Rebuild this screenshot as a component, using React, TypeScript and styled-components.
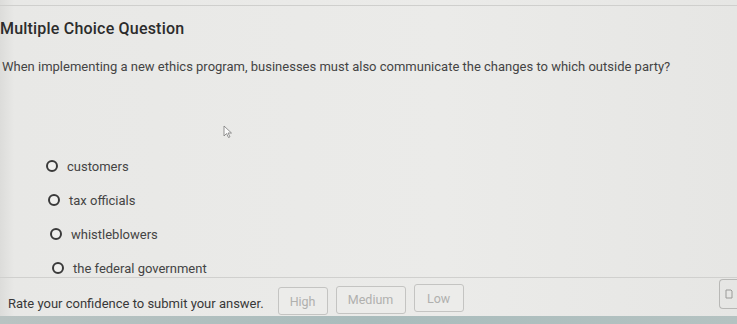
import React from "react";
import styled, { createGlobalStyle } from "styled-components";

const options = ["customers", "tax officials", "whistleblowers", "the federal government"];
const ratings = [
  { label: "High", width: 50 },
  { label: "Medium", width: 70 },
  { label: "Low", width: 50 },
];

const GlobalStyle = createGlobalStyle`
  html, body {
    margin: 0;
    padding: 0;
    background: #e7e7e5;
    font-family: Roboto, Lato, "Liberation Sans", sans-serif;
  }
`;

const Page = styled.div`
  width: 737px;
  height: 324px;
  overflow: hidden;
  display: flex;
  flex-direction: column;
  background: linear-gradient(90deg, #dcdcda 0px, #e8e8e6 14px, #ebebe9 60%, #e6e6e4 100%);
  color: #3a3a3a;
`;

const Main = styled.div`
  flex: 1;
  border-top: 1px solid #cfcfcd;
  margin-top: 5px;
  position: relative;
`;

const Title = styled.h1`
  margin: 13px 0 0 0;
  font-size: 16px;
  font-weight: 500;
  color: #2c2c2c;
  letter-spacing: 0.2px;
`;

const Question = styled.p`
  margin: 21px 0 0 2px;
  font-size: 13px;
  color: #444;
`;

const Cursor = styled.svg`
  position: absolute;
  left: 223px;
  top: 119px;
`;

const OptionList = styled.div`
  display: flex;
  flex-direction: column;
  gap: 16px;
  margin: 83px 0 0 46px;
`;

const Option = styled.label<{ $shift: number }>`
  display: flex;
  align-items: center;
  gap: 9px;
  margin-left: ${(p) => p.$shift}px;
  font-size: 13px;
  color: #444;
  height: 18px;
`;

const Radio = styled.span`
  width: 8px;
  height: 8px;
  border-radius: 50%;
  border: 2px solid #3a3a3a;
  background: #f0f0ee;
`;

const Footer = styled.div`
  height: 38px;
  border-top: 1px solid #d0d0ce;
  display: flex;
  align-items: flex-start;
  padding: 0 0 0 8px;
`;

const Prompt = styled.span`
  font-size: 13px;
  color: #383838;
  margin: 18px 14px 0 0;
`;

const RateButton = styled.button<{ $w: number; $top: number }>`
  width: ${(p) => p.$w}px;
  height: 28px;
  margin: ${(p) => p.$top}px 8px 0 0;
  border: 1px solid #c4c4c2;
  border-radius: 3px;
  background: #ececea;
  color: #b0b0ae;
  font-family: inherit;
  font-size: 12.5px;
`;

const Spacer = styled.div`
  flex: 1;
`;

const CornerButton = styled.div`
  width: 17px;
  height: 28px;
  border: 1px solid #b8b8b6;
  border-right: none;
  border-radius: 4px 0 0 4px;
  display: flex;
  align-items: center;
  justify-content: center;
  margin-top: 1px;
`;

const Taskbar = styled.div`
  height: 8px;
  background: linear-gradient(90deg, #b9c3c2, #a9bcbc 50%, #b4c2c1);
`;

export default function App() {
  return (
    <>
      <GlobalStyle />
      <Page>
        <Main>
          <Title>Multiple Choice Question</Title>
          <Question>
            When implementing a new ethics program, businesses must also communicate the changes to which outside party?
          </Question>
          <Cursor width="10" height="14" viewBox="0 0 10 14">
            <path d="M1 1 L1 11 L3.5 8.5 L5.5 12.5 L7 11.8 L5 8 L8.5 8 Z" fill="#fafafa" stroke="#7a7a7a" strokeWidth="0.8" />
          </Cursor>
          <OptionList>
            {options.map((o, i) => (
              <Option key={o} $shift={i * 2}>
                <Radio />
                {o}
              </Option>
            ))}
          </OptionList>
        </Main>
        <Footer>
          <Prompt>Rate your confidence to submit your answer.</Prompt>
          {ratings.map((r, i) => (
            <RateButton key={r.label} $w={r.width} $top={9 - i * 1.5}>
              {r.label}
            </RateButton>
          ))}
          <Spacer />
          <CornerButton>
            <svg width="8" height="10" viewBox="0 0 8 10">
              <path d="M1 1 H6 L7 2 V9 H1 Z" fill="none" stroke="#9a9a98" strokeWidth="1" />
            </svg>
          </CornerButton>
        </Footer>
        <Taskbar />
      </Page>
    </>
  );
}
